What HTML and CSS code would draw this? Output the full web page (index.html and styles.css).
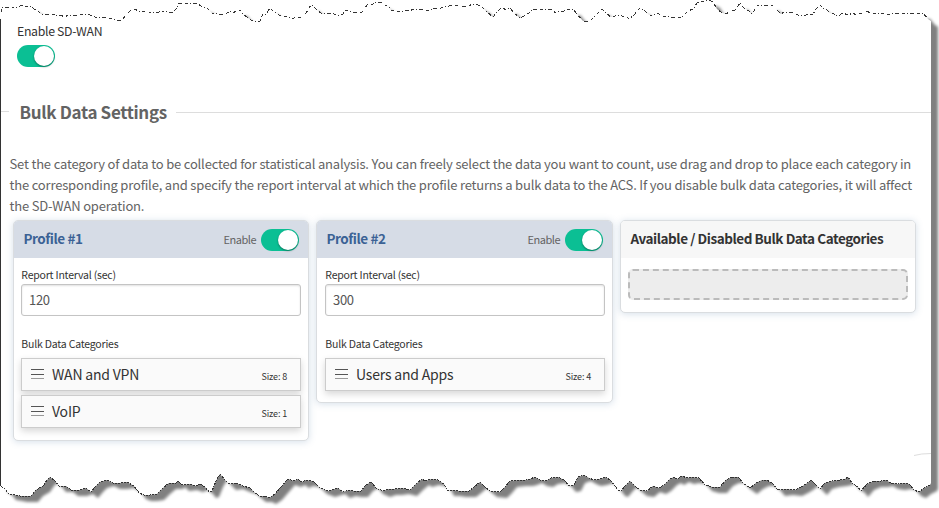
FILE: index.html
```
<!DOCTYPE html>
<html lang="en">

<head>
  <meta charset="UTF-8">
  <title>SD-WAN Settings</title>
  <link rel="stylesheet" href="styles.css">
</head>

<body>

  <!-- torn paper sheet behind the page -->
  <svg class="paper" width="939" height="508" viewBox="0 0 939 508">
    <path class="sheet" d="M0.5 19.5 L1.5 12 1.5 7 9 7 13 7 15 8 20 6 24 5 27 7 31 6 34 9 36 9 41 14 53 14 57 16 60 15 65 17 68 15 75 16 80 15 88 14 95 17 102 17 112 19 117 20 120 21 127 15 130 11 135 9 138 11 144 11 149 12 155 12 158 13 161 10 163 12 166 11 168 12 173 13 176 9 179 3 188 3 192 4 197 3 201 6 207 8 212 13 219 14 223 15 227 13 230 11 233 13 236 11 240 10 244 15 251 20 255 21 260 21 263 14 266 14 270 8 273 11 276 13 281 16 287 16 292 19 296 17 302 17 306 13 311 5 315 8 318 11 321 13 323 14 326 13 332 13 336 15 340 15 343 14 345 10 348 11 352 12 362 12 365 8 368 4 373 4 375 2 380 2 385 5 389 7 391 10 395 10 399 12 404 11 408 10 410 11 413 9 418 9 424 10 431 10 434 8 441 8 449 6 458 5 462 7 465 6 468 7 472 4 476 4 482 7 487 12 493 17 497 12 502 7 506 10 510 8 514 13 520 18 524 16 529 13 533 9 537 9 541 10 547 9 552 9 555 13 559 11 564 11 568 9 571 10 573 9 577 14 583 21 590 21 596 15 602 9 607 14 611 17 615 16 620 15 624 17 627 17 629 19 634 15 640 8 645 11 648 14 652 16 657 13 663 16 670 17 676 18 682 17 688 11 693 9 697 3 701 1 706 1 709 0 713 2 717 9 721 12 725 14 730 12 735 10 740 3 744 8 749 11 752 14 755 9 758 5 763 6 766 5 769 6 772 5 776 9 779 12 781 14 784 12 788 12 793 13 798 15 804 16 808 14 813 15 815 10 820 5 823 8 827 10 830 13 834 14 838 16 843 13 848 15 853 13 856 15 862 13 866 11 871 13 876 14 884 13 888 15 892 13 897 14 905 13 923 13 928 19 931 21
      V483 L930 485 924 488 919 492 914 490 909 484 904 483 898 484 891 483 886 480 881 481 874 481 867 484 861 491 858 487 852 483 848 477 845 479 840 480 832 481 825 483 820 489 815 484 811 480 806 484 801 487 795 490 786 489 778 490 773 484 767 480 762 480 756 483 750 488 743 483 738 477 732 477 726 480 720 487 712 487 705 485 699 478 692 477 687 478 682 476 677 479 674 477 670 479 664 485 659 488 653 486 647 491 640 490 635 486 630 481 626 485 621 491 618 490 612 482 606 477 600 479 594 480 589 478 584 475 578 477 574 485 569 486 564 480 558 477 551 478 546 481 540 480 535 477 530 479 526 480 519 480 510 481 505 487 500 492 490 491 484 486 480 482 473 488 469 491 459 491 453 490 447 490 444 484 438 480 432 479 425 481 422 479 416 484 410 490 402 488 395 489 389 489 383 491 376 488 371 482 366 485 361 491 354 491 349 490 343 492 338 488 328 491 320 488 314 482 312 481 306 480 302 482 298 479 294 481 288 479 281 487 275 494 269 498 265 496 259 496 254 492 250 488 243 486 236 483 229 484 225 480 220 474 216 481 212 491 209 492 206 488 201 484 196 486 190 484 182 485 178 481 176 483 169 483 163 488 157 494 150 495 144 495 139 493 134 486 127 482 120 483 113 483 107 480 100 482 96 486 91 492 86 488 80 490 71 490 66 486 59 486 55 481 50 477 47 480 43 486 36 490 31 496 25 496 20 496 15 495 9 494 5 489 0.5 486 Z" />
    <path class="tear tear-top" d="M1.5 12 V7 L9 7 13 7 15 8 20 6 24 5 27 7 31 6 34 9 36 9 41 14 53 14 57 16 60 15 65 17 68 15 75 16 80 15 88 14 95 17 102 17 112 19 117 20 120 21 127 15 130 11 135 9 138 11 144 11 149 12 155 12 158 13 161 10 163 12 166 11 168 12 173 13 176 9 179 3 188 3 192 4 197 3 201 6 207 8 212 13 219 14 223 15 227 13 230 11 233 13 236 11 240 10 244 15 251 20 255 21 260 21 263 14 266 14 270 8 273 11 276 13 281 16 287 16 292 19 296 17 302 17 306 13 311 5 315 8 318 11 321 13 323 14 326 13 332 13 336 15 340 15 343 14 345 10 348 11 352 12 362 12 365 8 368 4 373 4 375 2 380 2 385 5 389 7 391 10 395 10 399 12 404 11 408 10 410 11 413 9 418 9 424 10 431 10 434 8 441 8 449 6 458 5 462 7 465 6 468 7 472 4 476 4 482 7 487 12 493 17 497 12 502 7 506 10 510 8 514 13 520 18 524 16 529 13 533 9 537 9 541 10 547 9 552 9 555 13 559 11 564 11 568 9 571 10 573 9 577 14 583 21 590 21 596 15 602 9 607 14 611 17 615 16 620 15 624 17 627 17 629 19 634 15 640 8 645 11 648 14 652 16 657 13 663 16 670 17 676 18 682 17 688 11 693 9 697 3 701 1 706 1 709 0 713 2 717 9 721 12 725 14 730 12 735 10 740 3 744 8 749 11 752 14 755 9 758 5 763 6 766 5 769 6 772 5 776 9 779 12 781 14 784 12 788 12 793 13 798 15 804 16 808 14 813 15 815 10 820 5 823 8 827 10 830 13 834 14 838 16 843 13 848 15 853 13 856 15 862 13 866 11 871 13 876 14 884 13 888 15 892 13 897 14 905 13 923 13 928 19" />
    <path class="tear tear-bottom" d="M930 485 L924 488 919 492 914 490 909 484 904 483 898 484 891 483 886 480 881 481 874 481 867 484 861 491 858 487 852 483 848 477 845 479 840 480 832 481 825 483 820 489 815 484 811 480 806 484 801 487 795 490 786 489 778 490 773 484 767 480 762 480 756 483 750 488 743 483 738 477 732 477 726 480 720 487 712 487 705 485 699 478 692 477 687 478 682 476 677 479 674 477 670 479 664 485 659 488 653 486 647 491 640 490 635 486 630 481 626 485 621 491 618 490 612 482 606 477 600 479 594 480 589 478 584 475 578 477 574 485 569 486 564 480 558 477 551 478 546 481 540 480 535 477 530 479 526 480 519 480 510 481 505 487 500 492 490 491 484 486 480 482 473 488 469 491 459 491 453 490 447 490 444 484 438 480 432 479 425 481 422 479 416 484 410 490 402 488 395 489 389 489 383 491 376 488 371 482 366 485 361 491 354 491 349 490 343 492 338 488 328 491 320 488 314 482 312 481 306 480 302 482 298 479 294 481 288 479 281 487 275 494 269 498 265 496 259 496 254 492 250 488 243 486 236 483 229 484 225 480 220 474 216 481 212 491 209 492 206 488 201 484 196 486 190 484 182 485 178 481 176 483 169 483 163 488 157 494 150 495 144 495 139 493 134 486 127 482 120 483 113 483 107 480 100 482 96 486 91 492 86 488 80 490 71 490 66 486 59 486 55 481 50 477 47 480 43 486 36 490 31 496 25 496 20 496 15 495 9 494 5 489 0.5 486" />
    <path class="side" d="M0.5 19 V486" />
    <path class="corner" d="M914 455.5 Q921 453.5 931 453.5" />
  </svg>

  <div class="page">
    <div class="sdwan">
      <label class="sdwan-label">Enable SD-WAN</label>
      <div class="switch"></div>
    </div>

    <div class="section-title">
      <h2>Bulk Data Settings</h2>
    </div>

    <p class="description">
      Set the category of data to be collected for statistical analysis. You can freely select the data you want to count, use drag and drop to place each category in<br>
      the corresponding profile, and specify the report interval at which the profile returns a bulk data to the ACS. If you disable bulk data categories, it will affect<br>
      the SD-WAN operation.
    </p>

    <div class="cards">
      <div class="card">
        <div class="card-header">
          <h3>Profile #1</h3>
          <span class="enable">Enable</span>
          <div class="switch"></div>
        </div>
        <div class="card-body">
          <label>Report Interval (sec)</label>
          <input type="text" value="120">
          <label class="categories">Bulk Data Categories</label>
          <div class="item">
            <svg class="grip" width="13" height="12"><path d="M0 1.5h13M0 6.5h13" /><path class="light" d="M0 10.5h13" /></svg>
            <span class="name">WAN and VPN</span>
            <span class="size">Size: 8</span>
          </div>
          <div class="item">
            <svg class="grip" width="13" height="12"><path d="M0 1.5h13M0 6.5h13" /><path class="light" d="M0 10.5h13" /></svg>
            <span class="name">VoIP</span>
            <span class="size">Size: 1</span>
          </div>
        </div>
      </div>

      <div class="card">
        <div class="card-header">
          <h3>Profile #2</h3>
          <span class="enable">Enable</span>
          <div class="switch"></div>
        </div>
        <div class="card-body">
          <label>Report Interval (sec)</label>
          <input type="text" value="300">
          <label class="categories">Bulk Data Categories</label>
          <div class="item">
            <svg class="grip" width="13" height="12"><path d="M0 1.5h13M0 6.5h13" /><path class="light" d="M0 10.5h13" /></svg>
            <span class="name">Users and Apps</span>
            <span class="size">Size: 4</span>
          </div>
        </div>
      </div>

      <div class="card">
        <div class="card-header available">
          <h3>Available / Disabled Bulk Data Categories</h3>
        </div>
        <div class="card-body">
          <div class="drop-area"></div>
        </div>
      </div>
    </div>
  </div>

</body>

</html>
```
FILE: styles.css
```
:root {
  --green: #0bbf94;
  --text: #333;
  --muted: #636363;
}

* {
  box-sizing: border-box;
}

body {
  margin: 0;
  width: 939px;
  height: 508px;
  overflow: hidden;
  background: #fff;
  color: var(--text);
  font-family: "Noto Sans CJK SC", "Noto Sans", sans-serif;
  font-size: 12px;
}

h2, h3, p {
  margin: 0;
}

.paper {
  position: absolute;
  top: 0;
  left: 0;
}

.sheet {
  fill: #fff;
  filter: drop-shadow(7px 6px 1.5px #808080);
}

.tear, .side {
  fill: none;
  stroke: #333;
  stroke-width: 1;
  shape-rendering: crispEdges;
}

.tear-top {
  stroke-dasharray: 3 2 1 2 4 3;
}

.tear-bottom {
  stroke-dasharray: 2 1;
}

.corner {
  fill: none;
  stroke: #ddd;
}

.page {
  position: relative;
  width: 931px;
  padding-top: 22px;
}

.sdwan {
  padding-left: 17px;
  height: 80px;
}

.sdwan-label {
  display: block;
  height: 23px;
  line-height: 18px;
  font-size: 12.3px;
  letter-spacing: -.32px;
}

.switch {
  flex: none;
  width: 38px;
  height: 22px;
  padding: 1px;
  border-radius: 11px;
  background: var(--green);
}

.switch::after {
  content: "";
  display: block;
  width: 20px;
  height: 20px;
  margin-left: auto;
  border-radius: 50%;
  background: #fff;
  box-shadow: 0 1px 2px rgba(0, 0, 0, .4);
}

.section-title {
  display: flex;
  align-items: center;
  height: 21px;
  padding-left: 1px;
}

.section-title::before,
.section-title::after {
  content: "";
  height: 1px;
  background: #ddd;
}

.section-title::before {
  width: 8px;
  margin-bottom: 2px;
}

.section-title::after {
  flex: 1;
}

.section-title h2 {
  width: 167px;
  padding: 0 0 2px 10.5px;
  color: var(--muted);
  font-size: 17px;
  line-height: 21px;
  letter-spacing: -.33px;
  white-space: nowrap;
}

.description {
  height: 63px;
  margin: 30px 0 4px 9.5px;
  color: var(--muted);
  font-size: 13px;
  line-height: 21px;
  letter-spacing: -.175px;
  white-space: nowrap;
}

.cards {
  display: grid;
  grid-template-columns: 296px 297px 296px;
  align-items: start;
  gap: 7px;
  padding-left: 13px;
}

.card {
  border: 1px solid #dadde0;
  border-radius: 5px;
  background: #fff;
  box-shadow: 0 1px 7px rgba(90, 130, 170, .25);
}

.card-header {
  display: flex;
  align-items: center;
  height: 37px;
  padding: 0 9px 0 9.5px;
  border-radius: 4px 4px 0 0;
  background: #d6dce6;
}

.card-header h3 {
  flex: 1;
  padding-bottom: 3px;
  color: #3b6295;
  font-size: 13.5px;
  letter-spacing: -.44px;
  white-space: nowrap;
}

.available {
  background: #f7f7f7;
}

.available h3 {
  color: var(--text);
}

.enable {
  margin-right: 5px;
  padding-bottom: 2px;
  color: var(--muted);
  font-size: 11px;
  letter-spacing: -.5px;
}

.card-body {
  padding: 8px 7px 11px;
}

.card:first-child .card-body {
  padding-bottom: 12px;
}

.card:nth-child(2) .card-body {
  padding-left: 8px;
}

.card-body label {
  display: block;
  height: 18px;
  padding-left: .3px;
  font-size: 10.5px;
  line-height: 18px;
  letter-spacing: -.2px;
}

.card-body input {
  display: block;
  width: 100%;
  height: 32px;
  padding: 0 7px 2px;
  border: 1px solid #c4c4c4;
  border-radius: 3px;
  box-shadow: inset 0 1px 2px rgba(0, 0, 0, .12);
  color: #555;
  font: 13px "Noto Sans CJK SC", sans-serif;
  letter-spacing: -.3px;
}

.card-body .categories {
  height: 23px;
  margin-top: 19px;
}

.item {
  display: flex;
  align-items: center;
  height: 33px;
  padding: 0 13px 0 9px;
  border: 1px solid #ccc;
  background: #fafafa;
  box-shadow: 0 3px 7px rgba(0, 0, 0, .16);
}

.item + .item {
  margin-top: 4px;
}

.grip {
  margin-bottom: 2px;
  stroke: #555;
  fill: none;
}

.grip .light {
  stroke: #999;
}

.name {
  flex: 1;
  margin-left: 8px;
  padding-bottom: 2px;
  font-size: 14px;
  letter-spacing: -.2px;
}

.size {
  padding-top: 3px;
  font-size: 9px;
  letter-spacing: -.15px;
}

.drop-area {
  height: 31px;
  margin: 3px 0 1px;
  border: 2px dashed #bbb;
  border-radius: 5px;
  background: #ededed;
}
```
